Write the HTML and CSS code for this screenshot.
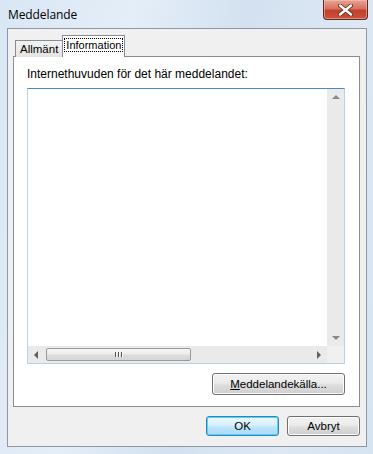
FILE: index.html
```html
<!DOCTYPE html>
<html lang="sv">
<head>
	<meta charset="utf-8">
	<title>Meddelande</title>
	<link rel="stylesheet" href="styles.css">
</head>
<body>
	<div class="fonster">
		<div class="titelrad">
			<span class="titel">Meddelande</span>
			<button class="stang" aria-label="Stäng">
				<svg width="15" height="12" viewBox="0 0 15 12">
					<path d="M2 1.5 L13 10.5 M13 1.5 L2 10.5" stroke="#5a2a20" stroke-width="4" stroke-linecap="round"/>
					<path d="M2 1.5 L13 10.5 M13 1.5 L2 10.5" stroke="#fff" stroke-width="2.4" stroke-linecap="round"/>
				</svg>
			</button>
		</div>

		<div class="klient">
			<div class="flikar">
				<div class="flik">Allmänt</div>
				<div class="flik vald"><span class="fokus">Information</span></div>
			</div>

			<section class="sida">
				<p class="etikett">Internethuvuden för det här meddelandet:</p>

				<div class="textruta">
					<div class="yta">
						<div class="innehall"></div>
						<div class="vscroll">
							<span class="pil upp"></span>
							<span class="pil ner"></span>
						</div>
					</div>
					<div class="hrad">
						<div class="hscroll">
							<span class="pil vanster"></span>
							<div class="spar">
								<div class="tumme">
									<span class="grepp"></span><span class="grepp"></span><span class="grepp"></span>
								</div>
							</div>
							<span class="pil hoger"></span>
						</div>
						<div class="horn"></div>
					</div>
				</div>

				<div class="kallrad">
					<button class="knapp kalla"><u>M</u>eddelandekälla...</button>
				</div>
			</section>

			<div class="knapprad">
				<button class="knapp standard">OK</button>
				<button class="knapp">Avbryt</button>
			</div>
		</div>
	</div>
</body>
</html>
```

FILE: styles.css
```css
html, body {
	margin: 0;
	padding: 0;
}

body {
	width: 373px;
	height: 454px;
	overflow: hidden;
	background: #fff;
	font-family: "Liberation Sans", Arial, sans-serif;
}

.fonster {
	width: 373px;
	height: 454px;
	box-sizing: border-box;
	padding: 0 6px 7px 7px;
	display: flex;
	flex-direction: column;
	background: linear-gradient(100deg, #d9e6f4 0%, #e4eef8 30%, #d3e1f0 55%, #dde8f4 80%, #d6e3f1 100%);
}

.titelrad {
	height: 28px;
	display: flex;
	align-items: flex-start;
	justify-content: space-between;
}

.titel {
	font-family: "Open Sans", "Noto Sans", sans-serif;
	font-size: 12px;
	color: #000;
	margin: 6px 0 0 1px;
	letter-spacing: -0.1px;
}

.stang {
	width: 45px;
	height: 20px;
	margin: 0 -1px 0 0;
	padding: 0;
	border: 1px solid #5c2b23;
	border-top: none;
	border-radius: 0 0 4px 4px;
	background: linear-gradient(#e8a394 0%, #d7725f 45%, #c2412a 55%, #c9523a 100%);
	box-shadow: inset 0 0 0 1px rgba(255, 200, 190, 0.5);
	display: flex;
	align-items: center;
	justify-content: center;
}

.klient {
	flex: 1;
	border: 1px solid #8e97a2;
	background: #f0f0f0;
	padding: 7px 6px 0 5px;
	display: flex;
	flex-direction: column;
}

.flikar {
	display: flex;
	align-items: flex-end;
	height: 21px;
	padding-left: 2px;
	position: relative;
	z-index: 1;
	margin-bottom: -1px;
}

.flik {
	font-size: 11.5px;
	height: 16px;
	line-height: 16px;
	padding: 0 4px;
	border: 1px solid #898c95;
	border-bottom: none;
	background: linear-gradient(#f2f2f2, #e3e3e3);
	color: #000;
}

.flik.vald {
	height: 21px;
	line-height: 19px;
	background: #fff;
	margin-left: -1px;
	padding: 0 2px;
	font-size: 11px;
}

.fokus {
	outline: 1px dotted #000;
	outline-offset: 0;
	padding: 0 1px;
}

.sida {
	height: 351px;
	box-sizing: border-box;
	border: 1px solid #898c95;
	background: #fff;
	padding: 11px 14px 0 13px;
}

.etikett {
	font-size: 12px;
	margin: 0 0 7px 0;
	color: #000;
	height: 13px;
	line-height: 13px;
}

.textruta {
	height: 276px;
	box-sizing: border-box;
	border: 1px solid #b7d2e8;
	border-top-color: #4a8bc3;
	display: flex;
	flex-direction: column;
	background: #fff;
}

.yta {
	flex: 1;
	display: flex;
}

.innehall {
	flex: 1;
}

.vscroll {
	width: 17px;
	background: #eaeaea;
	display: flex;
	flex-direction: column;
	justify-content: space-between;
	align-items: center;
	padding: 6px 0 6px 0;
	box-sizing: border-box;
}

.hrad {
	height: 17px;
	display: flex;
}

.hscroll {
	flex: 1;
	background: #eaeaea;
	display: flex;
	align-items: center;
	padding: 0 6px;
}

.spar {
	flex: 1;
	padding: 0 0 0 8px;
}

.tumme {
	width: 145px;
	height: 13px;
	box-sizing: border-box;
	border: 1px solid #9a9a9a;
	border-radius: 2px;
	background: linear-gradient(#f5f5f5 0%, #ececec 45%, #dcdcdc 55%, #d6d6d6 100%);
	display: flex;
	justify-content: center;
	align-items: center;
	gap: 1px;
}

.grepp {
	width: 1px;
	height: 5px;
	background: #555;
	border-right: 1px solid #fafafa;
}

.horn {
	width: 17px;
	background: #f0f0f0;
}

.pil {
	width: 0;
	height: 0;
	border: 4px solid transparent;
}

.upp {
	border-top: none;
	border-bottom-color: #888;
}

.ner {
	border-bottom: none;
	border-top-color: #888;
}

.vanster {
	border-left: none;
	border-right-color: #606060;
}

.hoger {
	border-right: none;
	border-left-color: #606060;
}

.kallrad {
	display: flex;
	justify-content: flex-end;
	margin-top: 9px;
}

.knapp {
	font-family: "Liberation Sans", Arial, sans-serif;
	font-size: 11.5px;
	color: #000;
	height: 21px;
	padding: 0;
	border: 1px solid #707070;
	border-radius: 3px;
	background: linear-gradient(#f2f2f2 0%, #ebebeb 45%, #dddddd 55%, #cfcfcf 100%);
	box-shadow: inset 0 0 0 1px #fcfcfc;
}

.kalla {
	width: 133px;
	height: 22px;
}

.knapprad {
	display: flex;
	justify-content: flex-end;
	gap: 8px;
	margin-top: 9px;
	padding-right: 0;
}

.knapprad .knapp {
	width: 73px;
	height: 20px;
}

.standard {
	border-color: #3c7fb1;
	box-shadow: inset 0 0 0 1px #48d8fb;
	background: linear-gradient(#eaf6fd 0%, #d9f0fc 45%, #bee6fd 55%, #a7d9f5 100%);
}
```
